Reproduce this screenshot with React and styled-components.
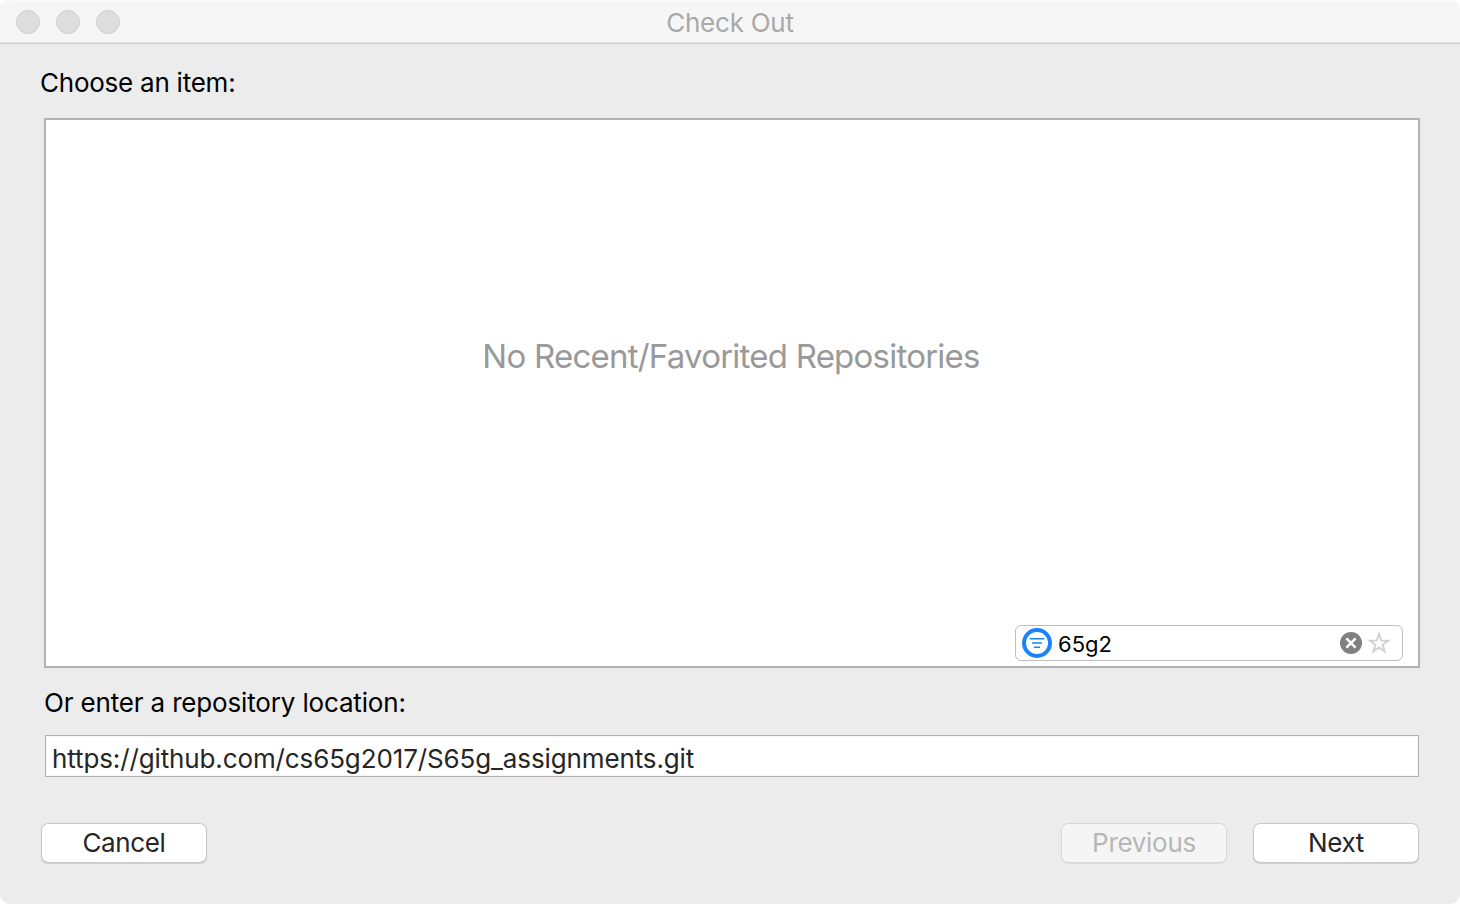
import React from "react";
import styled, { createGlobalStyle } from "styled-components";

const GlobalStyle = createGlobalStyle`
  * { box-sizing: border-box; }
  html, body { margin: 0; background: #fff; overflow: hidden; }
  body { font-family: Inter, "Liberation Sans", sans-serif; font-size: 26px; line-height: 32px; color: #000; }
`;

const Window = styled.main`
  width: 1460px;
  height: 904px;
  display: flex;
  flex-direction: column;
  overflow: hidden;
  border-radius: 10px;
  background: #ececec;
`;

const TitleBar = styled.header`
  height: 44px;
  flex: none;
  display: grid;
  grid-template-columns: 1fr auto 1fr;
  align-items: center;
  padding: 0 16px;
  background: #f6f6f6;
  border-bottom: 1px solid #d0d0d0;
  box-shadow: inset 0 1px 0 #fcfcfc, inset 0 -1px 0 #e4e4e4;
`;

const WindowControls = styled.div`
  display: flex;
  gap: 16px;
`;

const Control = styled.span`
  width: 24px;
  height: 24px;
  border-radius: 50%;
  background: #dddddd;
  border: 1px solid #cfcfcf;
`;

const Text = styled.span`
  display: block;
  white-space: pre;
  letter-spacing: ${(p) => p.$spacing || 0}px;
`;

const Title = styled.h1`
  margin: 3px 0 0;
  font: inherit;
  color: #a9a9a9;
`;

const Body = styled.section`
  flex: 1;
  display: flex;
  flex-direction: column;
  padding: 23px 40px 41px 44px;
`;

const ListLabel = styled.div`
  margin-left: -4px;
`;

const RepositoryList = styled.div`
  height: 550px;
  flex: none;
  margin-top: 19px;
  display: flex;
  flex-direction: column;
  background: #fff;
  border: 2px solid #b2b2b2;
  padding: 0 15px 5px;
`;

const EmptyMessage = styled.div`
  flex: 1;
  display: flex;
  justify-content: center;
  padding: 215px 2px 0 0;
  font-size: 33px;
  line-height: 42px;
  color: #999;
`;

const SearchField = styled.div`
  align-self: flex-end;
  width: 388px;
  height: 36px;
  display: flex;
  align-items: center;
  padding: 0 11px 0 5px;
  border: 1px solid #bfbfbf;
  border-radius: 6px;
  background: #fff;
`;

const SearchText = styled.div`
  flex: 1;
  padding: 1px 0 0 5px;
  font-size: 22px;
  line-height: 28px;
`;

const ClearIcon = styled.svg`
  margin-right: 5px;
`;

const LocationLabel = styled.label`
  margin-top: 19px;
`;

const LocationField = styled.div`
  height: 42px;
  margin: 16px 1px 0;
  padding: 7px 7px 0 6px;
  background: #fff;
  border: 1px solid #b0b0b0;
  box-shadow: inset 0 0 0 1px #f5f5f5;
  color: #262626;
`;

const ButtonRow = styled.footer`
  display: flex;
  gap: 26px;
  margin: 46px 1px 0 -3px;
`;

const Button = styled.button`
  width: 166px;
  height: 40px;
  padding: 0;
  display: flex;
  justify-content: center;
  align-items: center;
  border: 0;
  border-radius: 7px;
  font: inherit;
  color: ${(p) => (p.disabled ? "#b7b7b7" : "#262626")};
  background: ${(p) => (p.disabled ? "#f5f5f5" : "#fff")};
  box-shadow: ${(p) =>
    p.disabled
      ? "inset 0 0 0 1px #d8d8d8, 0 1px 1px #dedede"
      : "inset 0 0 0 1px #c8c8c8, inset 0 -1px 0 #b3b3b3, 0 1px 1px #cfcfcf"};
`;

const Spacer = styled.div`
  flex: 1;
`;

export default function App() {
  return (
    <>
      <GlobalStyle />
      <Window>
        <TitleBar>
          <WindowControls><Control /><Control /><Control /></WindowControls>
          <Title><Text $spacing={-0.25}>Check Out</Text></Title>
        </TitleBar>
        <Body>
          <ListLabel><Text $spacing={-0.24}>Choose an item:</Text></ListLabel>
          <RepositoryList>
            <EmptyMessage><Text $spacing={-0.77}>No Recent/Favorited Repositories</Text></EmptyMessage>
            <SearchField>
              <svg width="32" height="32" viewBox="0 0 32 32" fill="none" stroke="#1a82fb">
                <circle cx="16" cy="16" r="13" strokeWidth="4" />
                <path d="M8.7 11.8h14.6M11 16h10M13 20.2h6" strokeWidth="1.6" />
              </svg>
              <SearchText><Text $spacing={0}>65g2</Text></SearchText>
              <ClearIcon width="22" height="22" viewBox="0 0 22 22">
                <circle cx="11" cy="11" r="11" fill="#7f7f7f" />
                <path d="M6.4 6.4l9.2 9.2M15.6 6.4l-9.2 9.2" stroke="#fff" strokeWidth="2.5" />
              </ClearIcon>
              <svg width="24" height="24" viewBox="0 0 24 24" fill="none" stroke="#d2d2d2" strokeWidth="1.9">
                <path d="M12 2.8l2.2 6.8h7.1l-5.7 4.2 2.2 6.8-5.8-4.2-5.8 4.2 2.2-6.8-5.7-4.2h7.1z" />
              </svg>
            </SearchField>
          </RepositoryList>
          <LocationLabel><Text $spacing={-0.16}>Or enter a repository location:</Text></LocationLabel>
          <LocationField><Text $spacing={-0.12}>https://github.com/cs65g2017/S65g_assignments.git</Text></LocationField>
          <ButtonRow>
            <Button><Text $spacing={-0.35}>Cancel</Text></Button>
            <Spacer />
            <Button disabled><Text $spacing={-0.3}>Previous</Text></Button>
            <Button><Text $spacing={-0.4}>Next</Text></Button>
          </ButtonRow>
        </Body>
      </Window>
    </>
  );
}
